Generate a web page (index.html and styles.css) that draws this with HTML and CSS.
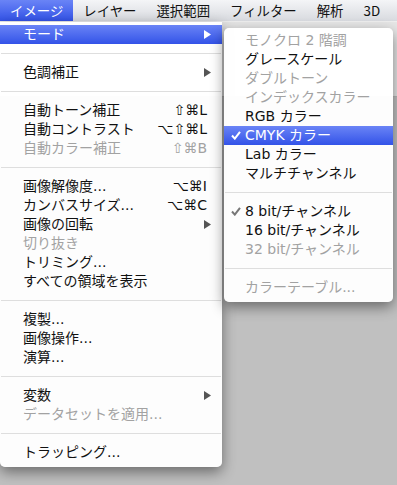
FILE: index.html
```html
<!DOCTYPE html>
<html lang="ja">
<head>
    <meta charset="UTF-8">
    <meta name="viewport" content="width=device-width, initial-scale=1.0">
    <title>イメージ メニュー</title>
    <link rel="stylesheet" href="styles.css">
</head>
<body>
    <div class="menubar">
        <span class="menu-title active">イメージ</span>
        <span class="menu-title">レイヤー</span>
        <span class="menu-title">選択範囲</span>
        <span class="menu-title">フィルター</span>
        <span class="menu-title">解析</span>
        <span class="menu-title">3D</span>
    </div>
    <div class="toolbar"></div>
    <div class="workspace"></div>

    <ul class="menu main-menu">
        <li class="item selected"><span>モード</span><svg class="arrow" width="7" height="9"><polygon points="0,0 7,4.5 0,9"/></svg></li>
        <li class="sep"></li>
        <li class="item"><span>色調補正</span><svg class="arrow" width="7" height="9"><polygon points="0,0 7,4.5 0,9"/></svg></li>
        <li class="sep"></li>
        <li class="item"><span>自動トーン補正</span><span class="key">⇧⌘L</span></li>
        <li class="item"><span>自動コントラスト</span><span class="key">⌥⇧⌘L</span></li>
        <li class="item disabled"><span>自動カラー補正</span><span class="key">⇧⌘B</span></li>
        <li class="sep"></li>
        <li class="item"><span>画像解像度...</span><span class="key">⌥⌘I</span></li>
        <li class="item"><span>カンバスサイズ...</span><span class="key">⌥⌘C</span></li>
        <li class="item"><span>画像の回転</span><svg class="arrow" width="7" height="9"><polygon points="0,0 7,4.5 0,9"/></svg></li>
        <li class="item disabled"><span>切り抜き</span></li>
        <li class="item"><span>トリミング...</span></li>
        <li class="item"><span>すべての領域を表示</span></li>
        <li class="sep"></li>
        <li class="item"><span>複製...</span></li>
        <li class="item"><span>画像操作...</span></li>
        <li class="item"><span>演算...</span></li>
        <li class="sep"></li>
        <li class="item"><span>変数</span><svg class="arrow" width="7" height="9"><polygon points="0,0 7,4.5 0,9"/></svg></li>
        <li class="item disabled"><span>データセットを適用...</span></li>
        <li class="sep"></li>
        <li class="item"><span>トラッピング...</span></li>
    </ul>

    <ul class="menu sub-menu">
        <li class="item disabled"><span class="check"></span><span>モノクロ 2 階調</span></li>
        <li class="item"><span class="check"></span><span>グレースケール</span></li>
        <li class="item disabled"><span class="check"></span><span>ダブルトーン</span></li>
        <li class="item disabled"><span class="check"></span><span>インデックスカラー</span></li>
        <li class="item"><span class="check"></span><span>RGB カラー</span></li>
        <li class="item selected"><span class="check"><svg width="10" height="9"><polyline points="1,4.5 3.8,7.6 9,0.8"/></svg></span><span>CMYK カラー</span></li>
        <li class="item"><span class="check"></span><span>Lab カラー</span></li>
        <li class="item"><span class="check"></span><span>マルチチャンネル</span></li>
        <li class="sep"></li>
        <li class="item"><span class="check"><svg width="10" height="9"><polyline points="1,4.5 3.8,7.6 9,0.8"/></svg></span><span>8 bit/チャンネル</span></li>
        <li class="item"><span class="check"></span><span>16 bit/チャンネル</span></li>
        <li class="item disabled"><span class="check"></span><span>32 bit/チャンネル</span></li>
        <li class="sep"></li>
        <li class="item disabled"><span class="check"></span><span>カラーテーブル...</span></li>
    </ul>
</body>
</html>
```

FILE: styles.css
```css
body {
    margin: 0;
    padding: 0;
    background-color: #c0c0c0;
    font-family: "DejaVu Sans", "Noto Sans CJK JP", sans-serif;
    font-size: 14px;
    color: #111;
    overflow: hidden;
}

.menubar {
    display: flex;
    height: 21px;
    background: linear-gradient(#f4f5f7, #d8dadf);
    border-bottom: 1px solid #eeeeee;
}

.menu-title {
    flex-shrink: 0;
    padding: 0 10px;
    line-height: 21px;
    font-family: "Noto Sans CJK JP", sans-serif;
    font-size: 13.4px;
    white-space: nowrap;
    color: #111;
}

.menu-title.active {
    background: linear-gradient(#6a84f6, #3353e8);
    color: white;
}

.toolbar {
    height: 74px;
    background-color: #e6e6e6;
    border-bottom: 1px solid #b8b8b8;
}

.workspace {
    height: 388px;
    background-color: #c0c0c0;
}

/* dropdown menus lie over the window */
.menu {
    position: absolute;
    list-style: none;
    margin: 0;
    background: rgba(255, 255, 255, 0.97);
    box-shadow: 0 5px 14px rgba(0, 0, 0, 0.45);
}

.main-menu {
    top: 22px;
    left: 0;
    width: 222px;
    padding: 3px 0 5px;
    border-radius: 0 0 5px 5px;
}

.sub-menu {
    top: 28px;
    left: 224px;
    width: 169px;
    padding: 3px 0 5px;
    border-radius: 5px;
}

.item {
    display: flex;
    align-items: center;
    justify-content: space-between;
    height: 19px;
    line-height: 19px;
    padding: 0 11px 0 23px;
    white-space: nowrap;
}

.sub-menu .item {
    justify-content: flex-start;
    padding: 0 0 0 6px;
}

.item.selected {
    background: linear-gradient(#6a84f6, #3353e8);
    color: white;
}

.item.disabled {
    color: #a2a2a2;
}

.key {
    margin-right: 4px;
}

.arrow {
    fill: #555;
}

.item.selected .arrow {
    fill: white;
}

.check {
    display: flex;
    align-items: center;
    width: 15px;
    height: 19px;
}

.check svg {
    fill: none;
    stroke: #777;
    stroke-width: 2;
    margin-left: 1px;
}

.item.selected .check svg {
    stroke: white;
}

.sep {
    height: 19px;
    display: flex;
    align-items: center;
}

.sep::after {
    content: "";
    flex: 1;
    height: 1px;
    margin: 0 1px;
    background-color: #dedede;
}
```
